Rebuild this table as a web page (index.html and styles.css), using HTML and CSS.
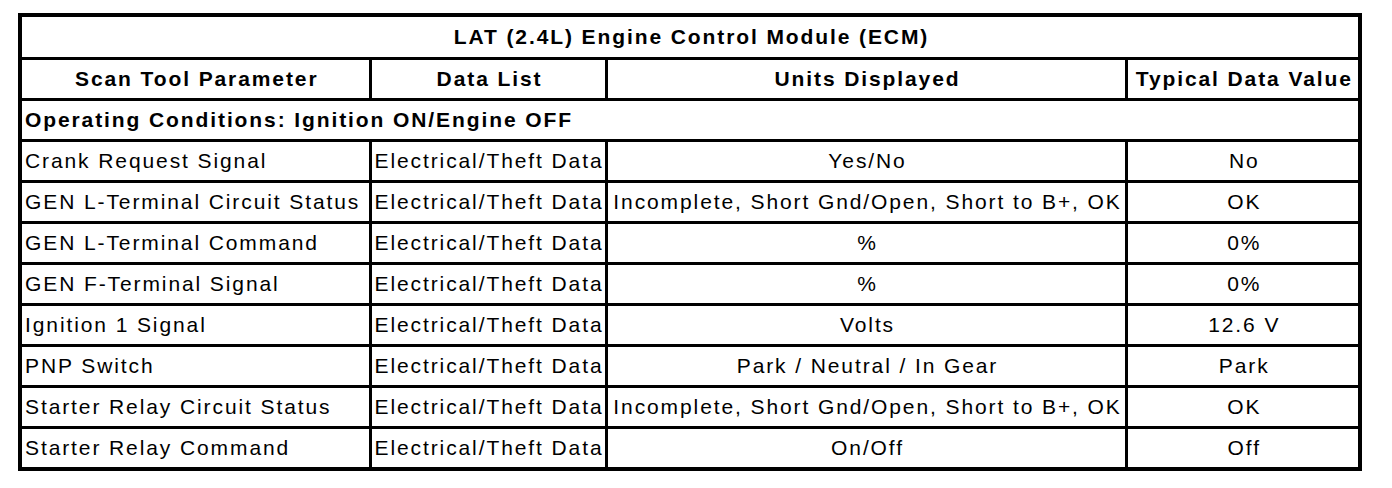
FILE: index.html
```html
<!DOCTYPE html>
<html>
<head>
<meta charset="utf-8">
<link rel="stylesheet" href="styles.css">
</head>
<body>
<table class="ecm">
<colgroup>
<col class="c1"><col class="c2"><col class="c3"><col class="c4">
</colgroup>
<tr class="title"><th colspan="4">LAT (2.4L) Engine Control Module (ECM)</th></tr>
<tr class="head"><th>Scan Tool Parameter</th><th>Data List</th><th>Units Displayed</th><th>Typical Data Value</th></tr>
<tr class="cond"><th colspan="4">Operating Conditions: Ignition ON/Engine OFF</th></tr>
<tr><td>Crank Request Signal</td><td>Electrical/Theft Data</td><td class="ctr">Yes/No</td><td class="ctr">No</td></tr>
<tr><td>GEN L-Terminal Circuit Status</td><td>Electrical/Theft Data</td><td class="ctr">Incomplete, Short Gnd/Open, Short to B+, OK</td><td class="ctr">OK</td></tr>
<tr><td>GEN L-Terminal Command</td><td>Electrical/Theft Data</td><td class="ctr">%</td><td class="ctr">0%</td></tr>
<tr><td>GEN F-Terminal Signal</td><td>Electrical/Theft Data</td><td class="ctr">%</td><td class="ctr">0%</td></tr>
<tr><td>Ignition 1 Signal</td><td>Electrical/Theft Data</td><td class="ctr">Volts</td><td class="ctr">12.6 V</td></tr>
<tr><td>PNP Switch</td><td>Electrical/Theft Data</td><td class="ctr">Park / Neutral / In Gear</td><td class="ctr">Park</td></tr>
<tr><td>Starter Relay Circuit Status</td><td>Electrical/Theft Data</td><td class="ctr">Incomplete, Short Gnd/Open, Short to B+, OK</td><td class="ctr">OK</td></tr>
<tr><td>Starter Relay Command</td><td>Electrical/Theft Data</td><td class="ctr">On/Off</td><td class="ctr">Off</td></tr>
</table>
</body>
</html>
```
FILE: styles.css
```css
html, body {
  margin: 0;
  padding: 0;
  background: #fff;
}
body {
  padding: 13px 0 0 18px;
  font-family: "Liberation Sans", Arial, sans-serif;
  color: #000;
}
.ecm {
  border-collapse: collapse;
  table-layout: fixed;
  width: 1343px;
  border: 4px solid #000;
  font-size: 21px;
  letter-spacing: 1.9px;
}
.c1 { width: 350px; }
.c2 { width: 236px; }
.c3 { width: 520px; }
.c4 { width: 234px; }
.ecm th, .ecm td {
  border: 3px solid #000;
  height: 38px;
  padding: 0 0 0 3px;
  white-space: nowrap;
  overflow: hidden;
  line-height: 22px;
  vertical-align: middle;
}
.ecm th { font-weight: bold; text-align: center; }
.ecm .title th { height: 40px; }
.ecm .cond th { text-align: left; }
.ecm td { text-align: left; font-weight: normal; }
.ecm td.ctr { text-align: center; }
```
